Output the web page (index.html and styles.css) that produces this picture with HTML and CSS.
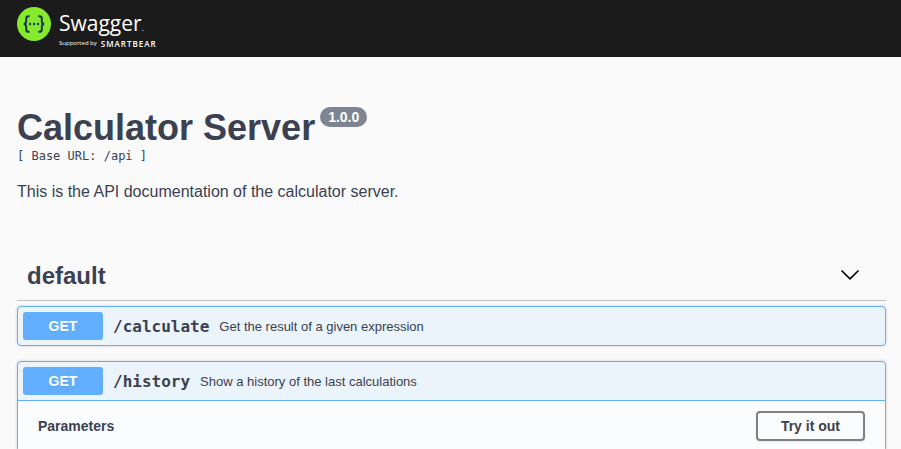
FILE: index.html
```html
<!DOCTYPE html>
<html lang="en">
<head>
<meta charset="utf-8">
<meta name="viewport" content="width=device-width, initial-scale=1">
<title>Swagger UI</title>
<link rel="stylesheet" href="styles.css">
</head>
<body>
<header class="topbar">
  <a class="brand" href="#">
    <svg class="brand-mark" viewBox="0 0 34 34" aria-hidden="true">
      <circle cx="17" cy="17" r="17" fill="#85ea2d"/>
      <g fill="none" stroke="#173647" stroke-width="2">
        <path d="M12.6 9.2h-.8c-2 0-2.6.8-2.6 2.4v2.6c0 1.7-.6 2.7-2.4 2.8 1.8.1 2.4 1.1 2.4 2.8v2.6c0 1.6.6 2.4 2.6 2.4h.8"/>
        <path d="M21.4 9.2h.8c2 0 2.6.8 2.6 2.4v2.6c0 1.7.6 2.7 2.4 2.8-1.8.1-2.4 1.1-2.4 2.8v2.6c0 1.6-.6 2.4-2.6 2.4h-.8"/>
      </g>
      <g fill="#173647">
        <circle cx="13" cy="17" r="1.2"/>
        <circle cx="17" cy="17" r="1.2"/>
        <circle cx="21" cy="17" r="1.2"/>
      </g>
    </svg>
    <span class="brand-text">
      <span class="brand-name">Swagger<span class="brand-dot">.</span></span>
      <span class="brand-support">Supported by <strong>SMARTBEAR</strong></span>
    </span>
  </a>
</header>
<main class="page">
  <section class="info">
    <h1 class="title">Calculator Server <span class="version">1.0.0</span></h1>
    <p class="base-url">[ Base URL: /api ]</p>
    <p class="description">This is the API documentation of the calculator server.</p>
  </section>
  <section class="tag">
    <div class="tag-header">
      <h2 class="tag-name">default</h2>
      <button class="toggle" type="button" aria-label="Collapse operations">
        <svg viewBox="0 0 20 20" aria-hidden="true"><path d="M1.5 4.5 10 12.8l8.500-8.300" fill="none" stroke="#000" stroke-width="1.6"/></svg>
      </button>
    </div>
    <article class="operation">
      <button class="summary" type="button">
        <span class="method">GET</span>
        <span class="path">/calculate</span>
        <span class="summary-text">Get the result of a given expression</span>
      </button>
    </article>
    <article class="operation open">
      <button class="summary" type="button">
        <span class="method">GET</span>
        <span class="path">/history</span>
        <span class="summary-text">Show a history of the last calculations</span>
      </button>
      <div class="section-header">
        <h3 class="section-title">Parameters</h3>
        <button class="try-out" type="button">Try it out</button>
      </div>
    </article>
  </section>
</main>
</body>
</html>
```
FILE: styles.css
```css
* { box-sizing: border-box; }

body {
  margin: 0;
  background: #fafafa;
  color: #3b4151;
  font-family: "Liberation Sans", Arial, sans-serif;
}

/* The page scrolls without showing a scrollbar. */
html { scrollbar-width: none; }

h1, h2, h3, p { margin: 0; }

.topbar {
  display: flex;
  padding: 7px 17px 8px;
  background: #1b1b1b;
}

.brand {
  display: flex;
  gap: 8px;
  color: #fff;
  text-decoration: none;
  font-family: "Open Sans", sans-serif;
}

.brand-mark { width: 34px; height: 34px; }

.brand-text { display: flex; flex-direction: column; gap: 3px; padding-top: 4px; }

.brand-name { font-size: 21px; font-weight: 400; line-height: 24px; }

.brand-dot { font-size: 8px; line-height: 8px; }

.brand-support {
  display: flex;
  align-items: center;
  gap: 4px;
  font-size: 6px;
  line-height: 11px;
}

.brand-support strong { font-size: 8px; font-weight: 600; letter-spacing: 1px; }

.page { padding: 0 15px 0 17px; }

.info { padding: 49px 0; }

.title {
  display: flex;
  align-items: flex-start;
  gap: 5px;
  font-size: 36px;
  line-height: 44px;
}

.version {
  margin-top: 1px;
  padding: 2px 8px;
  border-radius: 10px;
  background: #7d8492;
  color: #fff;
  font-size: 14px;
  line-height: 16px;
}

.base-url {
  font-family: "DejaVu Sans Mono", monospace;
  font-size: 12px;
  line-height: 12px;
}

.description { margin-top: 20px; font-size: 16px; line-height: 20px; }

.tag-header {
  display: flex;
  align-items: center;
  justify-content: space-between;
  padding: 10px 26px 9px 10px;
  margin-bottom: 5px;
  border-bottom: 1px solid rgba(59, 65, 81, 0.3);
}

.tag-name { font-size: 24px; line-height: 30px; }

.toggle { padding: 0; border: 0; background: none; }

.toggle svg { display: block; width: 20px; height: 20px; }

.operation {
  margin-bottom: 15px;
  border: 1px solid #61affe;
  border-radius: 4px;
  background: #ebf3fb;
  box-shadow: 0 0 3px rgba(0, 0, 0, 0.19);
}

.summary {
  display: flex;
  align-items: center;
  width: 100%;
  padding: 5px;
  border: 0;
  background: none;
  color: inherit;
  font-family: inherit;
  text-align: left;
}

.open .summary { border-bottom: 1px solid #61affe; }

.method {
  width: 80px;
  border-radius: 3px;
  background: #61affe;
  color: #fff;
  font-size: 14px;
  font-weight: 700;
  line-height: 28px;
  text-align: center;
  text-shadow: 0 1px 0 rgba(0, 0, 0, 0.1);
}

.path {
  padding: 0 10px;
  font-family: "DejaVu Sans Mono", monospace;
  font-size: 16px;
  font-weight: 700;
}

.summary-text { font-size: 13px; }

.section-header {
  display: flex;
  align-items: center;
  justify-content: space-between;
  padding: 10px 20px;
  background: #fbfcfe;
}

.section-title { font-size: 14px; }

.try-out {
  padding: 5px 23px;
  border: 2px solid #808080;
  border-radius: 4px;
  background: transparent;
  box-shadow: 0 1px 2px rgba(0, 0, 0, 0.1);
  color: inherit;
  font-family: inherit;
  font-size: 14px;
  font-weight: 700;
  line-height: 16px;
}
```
